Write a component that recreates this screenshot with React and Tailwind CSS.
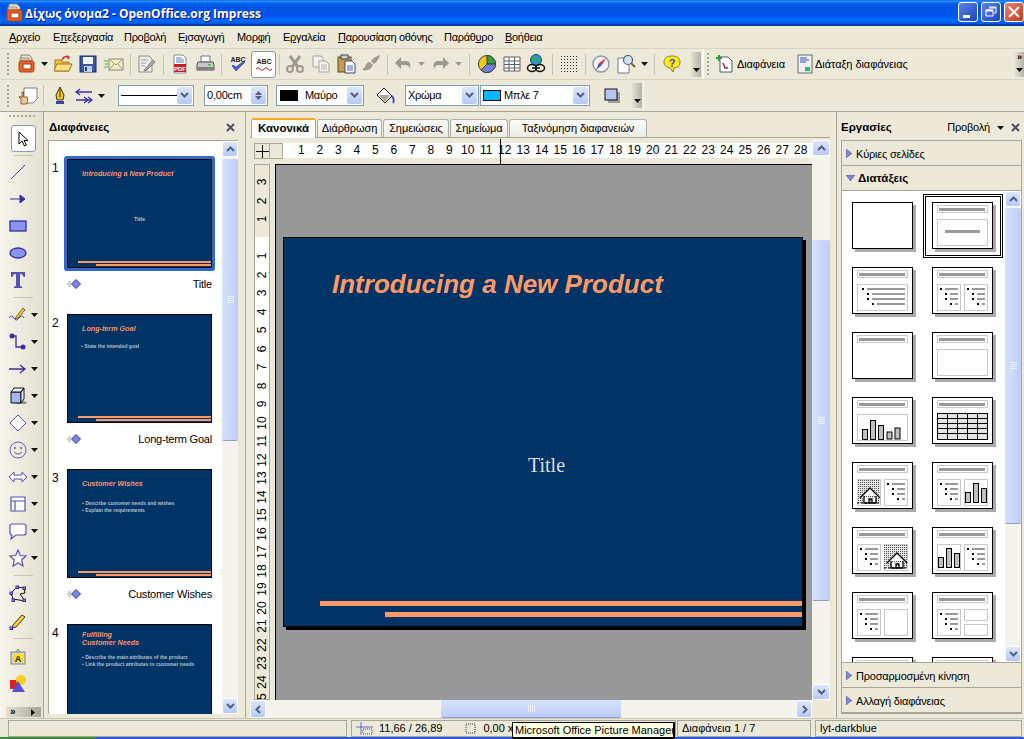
import React from 'react';

const Svg = ({ s = 20, children }) => (
  <svg width={s} height={s} viewBox="0 0 20 20" className="block shrink-0">{children}</svg>
);

const ImpressIcon = () => (
  <Svg>
    <path d="M4 1h8l3 3v3H4z" fill="#e8e4dc" stroke="#8a7f70" />
    <path d="M3 4h9v3H3z" fill="#d8c8b8" stroke="#a09080" />
    <rect x="2" y="7" width="15" height="11" rx="2" fill="#e8622a" stroke="#b04010" />
    <rect x="6" y="10" width="8" height="5" fill="#fff" stroke="#a03808" />
  </Svg>
);
const OpenIcon = () => (
  <Svg>
    <path d="M2 6h6l1 2h7v9H2z" fill="#f0c040" stroke="#a07818" />
    <path d="M1 17l3-7h15l-3 7z" fill="#fbe08a" stroke="#a07818" />
    <path d="M9 6c1-3 4-4 7-3" fill="none" stroke="#d83020" strokeWidth="1.5" />
    <path d="M14 1l3 2-2 3z" fill="#d83020" />
  </Svg>
);
const SaveIcon = () => (
  <Svg>
    <rect x="2" y="2" width="16" height="16" fill="#3a58a8" stroke="#1a2c70" />
    <rect x="5" y="3" width="10" height="7" fill="#f4f4f4" />
    <rect x="6" y="12" width="8" height="6" fill="#c8d0e0" />
    <rect x="7" y="13" width="2" height="4" fill="#2a3c80" />
  </Svg>
);
const MailIcon = () => (
  <Svg>
    <rect x="5" y="5" width="14" height="11" fill="#f4eecb" stroke="#8a8a70" />
    <path d="M5 5l7 6 7-6M5 16l5-6M19 16l-5-6" fill="none" stroke="#9a9a80" />
    <path d="M0 7h4M1 10h3M0 13h4" stroke="#30c040" />
  </Svg>
);
const EditIcon = () => (
  <Svg>
    <path d="M3 2h10l3 3v13H3z" fill="#f0f0ea" stroke="#8c8c84" />
    <path d="M5 6h7M5 9h5M5 12h4" stroke="#9c9c94" />
    <path d="M9 15l8-9 2 2-8 8-3 1z" fill="#a8a8a0" stroke="#807f78" />
  </Svg>
);
const PdfIcon = () => (
  <Svg>
    <path d="M4 1h9l3 3v15H4z" fill="#fff" stroke="#8c8c84" />
    <path d="M6 4h6M6 6h8M6 8h8" stroke="#6080c0" />
    <rect x="4" y="10" width="12" height="8" fill="#c82018" />
    <text x="10" y="16.5" fontSize="6" fontWeight="700" fontFamily="Liberation Sans" fill="#fff" textAnchor="middle">PDF</text>
  </Svg>
);
const PrintIcon = () => (
  <Svg>
    <path d="M6 2h9v6H6z" fill="#fff" stroke="#707070" />
    <path d="M3 8h15l1 3v5H2v-5z" fill="#c8c8c8" stroke="#505050" />
    <rect x="3" y="13" width="15" height="3" fill="#808080" />
    <rect x="13" y="10" width="3" height="1.5" fill="#30c040" />
  </Svg>
);
const SpellIcon = () => (
  <Svg>
    <text x="10" y="8" fontSize="7" fontWeight="700" fontFamily="Liberation Sans" fill="#222" textAnchor="middle">ABC</text>
    <path d="M4 12l4 5 9-9-1-1-8 6-3-2z" fill="#5060d0" stroke="#2a3490" strokeWidth=".6" />
  </Svg>
);
const AutoSpellIcon = () => (
  <Svg>
    <text x="10" y="10" fontSize="7" fontWeight="700" fontFamily="Liberation Sans" fill="#222" textAnchor="middle">ABC</text>
    <path d="M2 15q2-3 4 0t4 0 4 0 4 0" fill="none" stroke="#d81818" />
  </Svg>
);
const CutIcon = () => (
  <Svg>
    <path d="M5 2l8 11M15 2L7 13" stroke="#a09c90" strokeWidth="3" />
    <circle cx="5" cy="15" r="3" fill="none" stroke="#a09c90" strokeWidth="2" />
    <circle cx="15" cy="15" r="3" fill="none" stroke="#a09c90" strokeWidth="2" />
  </Svg>
);
const CopyIcon = () => (
  <Svg>
    <path d="M2 2h8l2 2v9H2z" fill="#f2f1ea" stroke="#a8a69c" />
    <path d="M8 7h7l3 3v8H8z" fill="#f2f1ea" stroke="#a8a69c" />
    <path d="M10 11h6M10 13h6M10 15h6" stroke="#b8b6ac" />
  </Svg>
);
const PasteIcon = () => (
  <Svg>
    <rect x="2" y="3" width="13" height="15" fill="#c49a50" stroke="#604818" />
    <rect x="5" y="1" width="7" height="4" fill="#d0d0d0" stroke="#404040" />
    <path d="M9 7h7l3 3v9H9z" fill="#fff" stroke="#404870" />
    <path d="M11 12h6M11 14h6M11 16h6" stroke="#4060c0" />
  </Svg>
);
const BrushIcon = () => (
  <Svg>
    <path d="M19 1c-3 1-7 3-9 6l3 3c3-2 5-6 6-9z" fill="#a09c90" />
    <path d="M9 8c-3 0-4 2-5 5l-3 3c4 1 9 0 11-5z" fill="#a09c90" />
  </Svg>
);
const UndoIcon = ({ flip }) => (
  <Svg>
    <g transform={flip ? 'translate(20 0) scale(-1 1)' : undefined}>
      <path d="M7 7h5c4 0 5 3 4 8-1-3-2-4-5-4H7v4L1 9l6-6z" fill="#9c9a90" />
    </g>
  </Svg>
);
const ChartIcon = () => (
  <Svg>
    <circle cx="10" cy="10" r="8.5" fill="#f0c820" stroke="#404040" />
    <path d="M10 10V1.5A8.5 8.5 0 0 1 18.5 10z" fill="#30a040" stroke="#404040" />
    <path d="M10 10h8.500A8.500 8.500 0 0 1 4 16z" fill="#7080d8" stroke="#404040" />
  </Svg>
);
const TableIcon = () => (
  <Svg>
    <path d="M2 3h16v14H2zM2 7h16M2 10.500h16M2 14h16M7 3v14M12.500 3v14" fill="#fff" stroke="#606060" />
  </Svg>
);
const GlobeIcon = () => (
  <Svg>
    <circle cx="10" cy="6" r="5.500" fill="#3090d8" stroke="#204870" />
    <path d="M6 3c3 0 4 1 4 3s-3 2-4 0zM11 5l4-1v3l-3 1z" fill="#30b040" />
    <ellipse cx="6" cy="14" rx="4.500" ry="3.500" fill="none" stroke="#111" strokeWidth="1.500" />
    <ellipse cx="14" cy="14" rx="4.500" ry="3.500" fill="none" stroke="#111" strokeWidth="1.500" />
    <path d="M6 14h8" stroke="#111" strokeWidth="1.500" />
  </Svg>
);
const GridIcon = () => (
  <svg width="17" height="17" viewBox="0 0 17 17" className="block shrink-0">
    <defs>
      <pattern id="griddots" width="3" height="3" patternUnits="userSpaceOnUse">
        <rect width="1" height="1" fill="#222" />
      </pattern>
    </defs>
    <rect width="17" height="17" fill="url(#griddots)" />
  </svg>
);
const CompassIcon = () => (
  <Svg>
    <circle cx="10" cy="10" r="8" fill="#f4f4f8" stroke="#9098b0" strokeWidth="1.500" />
    <path d="M15 4l-4 7-3-2z" fill="#d83838" />
    <path d="M5 16l3-7 3 2z" fill="#3858c8" />
  </Svg>
);
const ZoomIcon = () => (
  <Svg>
    <path d="M2 4h8l3 3v12H2z" fill="#fff" stroke="#707890" />
    <circle cx="12" cy="6" r="4.500" fill="#cfe4f8" stroke="#505870" strokeWidth="1.200" />
    <path d="M15 9l4 4" stroke="#806030" strokeWidth="2" />
  </Svg>
);
const HelpIcon = () => (
  <Svg>
    <path d="M10 2c5 0 8 2 8 6s-3 6-6 6l-1 4-3-4c-3-1-6-2-6-6s3-6 8-6z" fill="#ffe818" stroke="#808030" />
    <text x="10" y="12.500" fontSize="11" fontWeight="700" fontFamily="Liberation Sans" fill="#3848c0" textAnchor="middle">?</text>
  </Svg>
);
const NewSlideIcon = () => (
  <Svg>
    <path d="M5 3h8l4 4v11H5z" fill="#fff" stroke="#505868" />
    <path d="M4 1v6M1 4h6" stroke="#28a038" strokeWidth="2" />
    <path d="M8 9l2 5 3 0" fill="none" stroke="#c81828" strokeWidth="1.500" />
  </Svg>
);
const LayoutDocIcon = () => (
  <Svg>
    <rect x="3" y="1" width="14" height="18" fill="#eef0f4" stroke="#607060" />
    <path d="M5 4h7M5 6h9M5 8h6" stroke="#4050b8" />
    <rect x="10" y="13" width="5" height="4" fill="#30c050" />
  </Svg>
);
const HandDocIcon = () => (
  <Svg>
    <path d="M6 2h13v11l-4 4H6z" fill="#fff" stroke="#808078" />
    <path d="M3 18v-5l-2-2 1-1 2 2V6h1.500v5h4v5l-1 2z" fill="#f4c890" stroke="#503820" strokeWidth=".7" />
  </Svg>
);
const PenIcon = () => (
  <Svg>
    <path d="M10 1l4 8-1 5H7L6 9z" fill="#f4c030" stroke="#403810" />
    <path d="M10 3v8" stroke="#403810" />
    <rect x="6" y="15" width="8" height="3" fill="#4040b0" />
  </Svg>
);
const ArrowStyleIcon = () => (
  <Svg>
    <path d="M18 6H3M6 3L2 6l4 3" fill="none" stroke="#3830a8" strokeWidth="1.300" />
    <path d="M2 14h15M14 11l4 3-4 3M10 11l4 3-4 3" fill="none" stroke="#3830a8" strokeWidth="1.300" />
  </Svg>
);
const BucketIcon = () => (
  <Svg>
    <path d="M9 2l8 8-7 7-8-8z" fill="#f4f4f4" stroke="#202020" />
    <path d="M4 9h11l-5 7z" fill="#a8a8a0" />
    <path d="M17 10c2 2 2 6 1 7" fill="none" stroke="#4050c8" strokeWidth="2" />
  </Svg>
);
const ShadowIcon = () => (
  <Svg>
    <rect x="6" y="6" width="12" height="11" fill="#a0a098" />
    <rect x="3" y="3" width="12" height="11" fill="#b8c4f0" stroke="#101010" />
  </Svg>
);
const Caret = () => (
  <svg width="7" height="4" viewBox="0 0 7 4" className="block shrink-0"><path d="M0 0h7L3.500 4z" fill="#111" /></svg>
);
const Chevron = ({ dir = 'down', color = '#4d6185' }) => {
  const paths = {
    down: 'M1 2l3.500 3.500L8 2',
    up: 'M1 6l3.500-3.500L8 6',
    left: 'M6 1L2.500 4.500 6 8',
    right: 'M3 1l3.500 3.500L3 8',
  };
  return (
    <svg width="9" height="9" viewBox="0 0 9 9" className="block shrink-0">
      <path d={paths[dir]} fill="none" stroke={color} strokeWidth="2" />
    </svg>
  );
};

const Grip = () => (
  <div className="flex flex-col gap-[2px] w-[3px] py-[1px]">
    {[0, 1, 2, 3, 4, 5].map((i) => <div key={i} className="h-[2px] w-[2px] bg-[#a8a696]" />)}
  </div>
);
const Sep = ({ w }) => (
  <div className={`${w} flex justify-center shrink-0`}><div className="w-px h-[21px] bg-[#c8c5b2]" /></div>
);
const Btn = ({ w, children }) => (
  <div className={`${w} flex items-center justify-center shrink-0`}>{children}</div>
);
const Overflow = ({ className }) => (
  <div className={`${className} flex flex-col items-center justify-end pb-[5px] bg-gradient-to-r from-[#e4e1d0] to-[#b4b2a2] shrink-0`}>
    <Caret />
  </div>
);

const Combo = ({ w, children }) => (
  <div className={`${w} h-[21px] flex items-center bg-white border border-[#7f9db9] pl-[2px] pr-[1px] shrink-0`}>
    <div className="flex-1 min-w-0 flex items-center gap-[7px] text-[11px] tracking-[-0.3px] whitespace-nowrap overflow-hidden">{children}</div>
    <div className="w-[15px] h-[17px] flex items-center justify-center rounded-[2px] bg-gradient-to-b from-[#dde6fb] to-[#b6c9f5]">
      <Chevron />
    </div>
  </div>
);

const menuItems = [
  { w: 'w-[44px]', a: '', u: 'Α', b: 'ρχείο' },
  { w: 'w-[71px]', a: 'Ε', u: 'π', b: 'εξεργασία' },
  { w: 'w-[54px]', a: 'Προ', u: 'β', b: 'ολή' },
  { w: 'w-[59px]', a: 'Ε', u: 'ι', b: 'σαγωγή' },
  { w: 'w-[46px]', a: 'Μορ', u: 'φ', b: 'ή' },
  { w: 'w-[55px]', a: 'Ε', u: 'ρ', b: 'γαλεία' },
  { w: 'w-[106px]', a: '', u: 'Π', b: 'αρουσίαση οθόνης' },
  { w: 'w-[61px]', a: 'Παράθ', u: 'υ', b: 'ρο' },
  { w: 'w-[60px]', a: '', u: 'Β', b: 'οήθεια' },
];

const TitleBar = () => (
  <div className="h-[26px] shrink-0 flex items-center pl-[5px] pr-0 bg-[linear-gradient(to_bottom,#0058ee_0%,#3593ff_4%,#288eff_6%,#127dff_8%,#036ffc_10%,#0262ee_14%,#0057e5_20%,#0054e3_24%,#0055eb_56%,#005bf5_66%,#026afe_76%,#0062ef_86%,#0052d6_92%,#0040ab_94%,#003092_100%)]">
    <ImpressIcon />
    <span className="pt-[1px] text-[12px] font-bold text-white font-['Open_Sans','Liberation_Sans',sans-serif] [text-shadow:1px_1px_#0f1089]">Δίχως όνομα2 - OpenOffice.org Impress</span>
    <div className="ml-auto flex gap-[3px] mb-[3px]">
      <div className="w-[20px] h-[20px] rounded-[3px] border border-white bg-gradient-to-br from-[#5b83e6] to-[#1c45b8] flex items-end pl-[4px] pb-[3px]">
        <div className="w-[7px] h-[3px] bg-white" />
      </div>
      <div className="w-[20px] h-[20px] rounded-[3px] border border-white bg-gradient-to-br from-[#5b83e6] to-[#1c45b8] flex items-center justify-center">
        <svg width="12" height="12" viewBox="0 0 12 12"><path d="M4 1h7v6H9M1 4h7v6H1zM4 2h7" fill="none" stroke="#fff" /><path d="M1 4.500h7" stroke="#fff" strokeWidth="2" /></svg>
      </div>
      <div className="w-[20px] h-[20px] rounded-[3px] border border-white bg-gradient-to-br from-[#e8876a] to-[#c2351a] flex items-center justify-center">
        <svg width="12" height="12" viewBox="0 0 12 12"><path d="M1 1l10 10M11 1L1 11" stroke="#fff" strokeWidth="2" /></svg>
      </div>
    </div>
  </div>
);

const MenuBar = () => (
  <div className="h-[23px] shrink-0 flex items-center pl-[9px] text-[11px] tracking-[-0.3px] border-b border-[#d8d5c4]">
    {menuItems.map((m) => (
      <span key={m.b} className={`${m.w} shrink-0 whitespace-nowrap`}>{m.a}<u>{m.u}</u>{m.b}</span>
    ))}
  </div>
);

const ToolbarOne = () => (
  <div className="h-[31px] shrink-0 flex items-center border-b border-[#d8d5c4]">
    <div className="w-[15px] flex justify-end pr-[5px] shrink-0"><Grip /></div>
    <Btn w="w-[24px]"><ImpressIcon /></Btn>
    <Btn w="w-[11px]"><Caret /></Btn>
    <Btn w="w-[25px]"><OpenIcon /></Btn>
    <Btn w="w-[25px]"><SaveIcon /></Btn>
    <Btn w="w-[27px]"><MailIcon /></Btn>
    <Sep w="w-[6px]" />
    <Btn w="w-[26px]"><EditIcon /></Btn>
    <Sep w="w-[8px]" />
    <Btn w="w-[25px]"><PdfIcon /></Btn>
    <Btn w="w-[25px]"><PrintIcon /></Btn>
    <Sep w="w-[8px]" />
    <Btn w="w-[26px]"><SpellIcon /></Btn>
    <Btn w="w-[25px]">
      <div className="w-[25px] h-[27px] rounded-[3px] border border-[#7f9db9] bg-white flex items-center justify-center"><AutoSpellIcon /></div>
    </Btn>
    <Sep w="w-[6px]" />
    <Btn w="w-[26px]"><CutIcon /></Btn>
    <Btn w="w-[25px]"><CopyIcon /></Btn>
    <Btn w="w-[25px]"><PasteIcon /></Btn>
    <Btn w="w-[25px]"><BrushIcon /></Btn>
    <Sep w="w-[8px]" />
    <Btn w="w-[25px]"><UndoIcon /></Btn>
    <Btn w="w-[11px]"><svg width="7" height="4" viewBox="0 0 7 4"><path d="M0 0h7L3.500 4z" fill="#a09c90" /></svg></Btn>
    <Btn w="w-[25px]"><UndoIcon flip /></Btn>
    <Btn w="w-[12px]"><svg width="7" height="4" viewBox="0 0 7 4"><path d="M0 0h7L3.500 4z" fill="#a09c90" /></svg></Btn>
    <Sep w="w-[10px]" />
    <Btn w="w-[25px]"><ChartIcon /></Btn>
    <Btn w="w-[25px]"><TableIcon /></Btn>
    <Btn w="w-[24px]"><GlobeIcon /></Btn>
    <Sep w="w-[8px]" />
    <Btn w="w-[26px]"><GridIcon /></Btn>
    <Sep w="w-[6px]" />
    <Btn w="w-[25px]"><CompassIcon /></Btn>
    <Btn w="w-[26px]"><ZoomIcon /></Btn>
    <Btn w="w-[10px]"><Caret /></Btn>
    <Sep w="w-[10px]" />
    <Btn w="w-[26px]"><HelpIcon /></Btn>
    <div className="w-[6px] shrink-0" />
    <Overflow className="w-[10px] h-[25px]" />
    <div className="w-[2px] h-full bg-white/70 ml-[1px] shrink-0" />
    <div className="w-[3px] shrink-0" />
    <Grip />
    <div className="w-[5px] shrink-0" />
    <NewSlideIcon />
    <span className="ml-[2px] w-[58px] shrink-0 text-[11px] tracking-[-0.1px] whitespace-nowrap">Διαφάνεια</span>
    <LayoutDocIcon />
    <span className="text-[11px] tracking-[-0.05px] whitespace-nowrap">Διάταξη διαφάνειας</span>
    <div className="ml-auto w-[9px] h-[25px] flex flex-col items-center justify-between pb-[5px] bg-gradient-to-r from-[#e4e1d0] to-[#b4b2a2] shrink-0">
      <span className="text-[9px] leading-[11px] font-bold">»</span>
      <Caret />
    </div>
  </div>
);

const ToolbarTwo = () => (
  <div className="h-[31px] shrink-0 flex items-center">
    <div className="w-[15px] flex justify-end pr-[5px] shrink-0"><Grip /></div>
    <Btn w="w-[25px]"><HandDocIcon /></Btn>
    <Sep w="w-[6px]" />
    <Btn w="w-[27px]"><PenIcon /></Btn>
    <Btn w="w-[22px]"><ArrowStyleIcon /></Btn>
    <Btn w="w-[13px]"><Caret /></Btn>
    <div className="w-[10px] shrink-0" />
    <Combo w="w-[76px]"><div className="w-[56px] h-px bg-black" /></Combo>
    <div className="w-[10px] shrink-0" />
    <div className="w-[64px] h-[21px] flex items-center bg-white border border-[#7f9db9] pl-[2px] pr-[1px] shrink-0">
      <span className="flex-1 text-[11px] tracking-[-0.2px]">0,00cm</span>
      <div className="w-[15px] h-[17px] flex flex-col items-center justify-center gap-[1px] rounded-[2px] bg-gradient-to-b from-[#dde6fb] to-[#b6c9f5]">
        <svg width="7" height="4" viewBox="0 0 7 4"><path d="M0 4L3.500 0 7 4z" fill="#4d6185" /></svg>
        <svg width="7" height="4" viewBox="0 0 7 4"><path d="M0 0h7L3.500 4z" fill="#4d6185" /></svg>
      </div>
    </div>
    <div className="w-[8px] shrink-0" />
    <Combo w="w-[88px]"><div className="w-[18px] h-[11px] bg-black ml-[1px]" /><span>Μαύρο</span></Combo>
    <Btn w="w-[41px]"><BucketIcon /></Btn>
    <Combo w="w-[74px]"><span>Χρώμα</span></Combo>
    <div className="w-[1px] shrink-0" />
    <Combo w="w-[110px]"><div className="w-[18px] h-[11px] bg-[#00b8ff] border border-black" /><span className="-ml-[4px]">Μπλε 7</span></Combo>
    <Btn w="w-[44px]"><ShadowIcon /></Btn>
    <Overflow className="w-[10px] h-[25px] -ml-[2px]" />
    <div className="w-px h-full bg-white/70 ml-[1px]" />
  </div>
);

const railTop = [
  { key: 'line', icon: <path d="M3 17L17 3" stroke="#4a3fb0" /> },
  { key: 'arrow', icon: <path d="M2 10h15M12 6l5 4-5 4z" stroke="#382ea0" fill="#382ea0" /> },
  { key: 'rect', icon: <rect x="2" y="5" width="16" height="10" fill="#8a94f0" stroke="#3a2f98" strokeWidth="1.300" /> },
  { key: 'ellipse', icon: <ellipse cx="10" cy="10" rx="8" ry="5" fill="#8a94f0" stroke="#3a2f98" strokeWidth="1.300" /> },
  { key: 'text', icon: <path d="M3 2h14v5h-1.500c-.5-2-1-3-3.500-3v12l2 .5V18H6v-1.500l2-.5V4c-2.500 0-3 1-3.500 3H3z" fill="#5a50b8" /> },
];
const railMid = [
  { key: 'curve', icon: <g><path d="M1 13q3-4 5 0t5 0 5 0" fill="none" stroke="#4a3fb0" /><path d="M8 12l7-9 2 2-7 8-3 1z" fill="#f8c820" stroke="#403810" strokeWidth=".7" /></g> },
  { key: 'connector', icon: <g><circle cx="4" cy="4" r="2.500" fill="#382ea0" /><circle cx="15" cy="15" r="2.500" fill="#382ea0" /><path d="M4 4h4v11h7" fill="none" stroke="#382ea0" strokeWidth="1.300" /></g> },
  { key: 'lines', icon: <path d="M1 10h16M12 6l5 4-5 4" fill="none" stroke="#382ea0" strokeWidth="1.300" /> },
  { key: 'cube', icon: <g><path d="M6 18h12l1-2-4-1z" fill="#909088" /><path d="M3 6h10v11H3z" fill="#a8b4f0" stroke="#101010" /><path d="M3 6l3-4h10l-3 4zM13 6l3-4v11l-3 4z" fill="#e8ecfc" stroke="#101010" /></g> },
  { key: 'diamond', icon: <path d="M10 2l8 8-8 8-8-8z" fill="#fff" stroke="#5a50b8" /> },
  { key: 'smile', icon: <g fill="none" stroke="#6a5fc0"><circle cx="10" cy="10" r="8" /><circle cx="7" cy="8" r=".8" /><circle cx="13" cy="8" r=".8" /><path d="M6 12q4 4 8 0" /></g> },
  { key: 'arrows', icon: <path d="M1 10l5-5v3h8V5l5 5-5 5v-3H6v3z" fill="#fff" stroke="#5a50b8" /> },
  { key: 'flow', icon: <path d="M3 3h14v14H3zM3 7h14M7 7v10" fill="#fff" stroke="#5a50b8" strokeWidth="1.200" /> },
  { key: 'callout', icon: <path d="M4 3h12q2 0 2 2v7q0 2-2 2H8l-5 4 1-4q-2 0-2-2V5q0-2 2-2z" fill="#fff" stroke="#5a50b8" strokeWidth="1.200" /> },
  { key: 'star', icon: <path d="M10 2l2.300 5.500 5.700.5-4.300 4 1.300 6-5-3-5 3 1.300-6L2 8l5.700-.5z" fill="#fff" stroke="#5a50b8" strokeWidth="1.200" /> },
];

const RailItem = ({ children, caret }) => (
  <div className="h-[27px] flex items-center pl-[6px] shrink-0">
    <div className="w-[23px] flex justify-center"><Svg>{children}</Svg></div>
    {caret && <div className="ml-[2px]"><Caret /></div>}
  </div>
);
const RailSep = ({ h = 'h-[6px]' }) => <div className={`${h} flex items-center justify-center shrink-0 pl-[3px]`}><div className="h-px w-[19px] bg-[#c8c5b2]" /></div>;

const ToolRail = () => (
  <div className="w-[44px] shrink-0 flex flex-col border-r border-[#a8a696] bg-gradient-to-r from-[#f6f4ec] to-[#e4e1d0] pt-[3px]">
    <div className="flex gap-[2px] justify-center h-[8px] pl-[1px]">
      {[0, 1, 2, 3, 4, 5, 6].map((i) => <div key={i} className="h-[2px] w-[2px] bg-[#a8a696]" />)}
    </div>
    <div className="ml-[11px] w-[25px] h-[27px] mt-[2px] rounded-[3px] border border-[#7f9db9] bg-white flex items-center justify-center shrink-0">
      <svg width="12" height="16" viewBox="0 0 12 16"><path d="M1 1v12l3-3 2.500 5 2-1-2.500-4.500h4z" fill="#fff" stroke="#000" /></svg>
    </div>
    <RailSep />
    {railTop.map((r) => <RailItem key={r.key}>{r.icon}</RailItem>)}
    <RailSep h="h-[8px]" />
    {railMid.map((r) => <RailItem key={r.key} caret>{r.icon}</RailItem>)}
    <RailSep h="h-[9px]" />
    <RailItem><g><path d="M5 15L3 9l6-6 7 1 1 5-5 1 5 7z" fill="none" stroke="#101010" /><g fill="#8a94f0" stroke="#3a2f98"><rect x="2" y="8" width="2.500" height="2.500" /><rect x="8" y="2" width="2.500" height="2.500" /><rect x="15" y="3" width="2.500" height="2.500" /><rect x="4" y="15" width="2.500" height="2.500" /><rect x="15" y="15" width="2.500" height="2.500" /></g></g></RailItem>
    <RailItem><g><path d="M5 14l9-10 3 2-9 10-4 1z" fill="#f8d040" stroke="#403810" /><rect x="2" y="16" width="2.500" height="2.500" fill="#8a94f0" stroke="#3a2f98" /></g></RailItem>
    <RailSep h="h-[9px]" />
    <RailItem><g><rect x="3" y="5" width="14" height="12" fill="#d8d8d0" stroke="#808078" /><rect x="5" y="7" width="10" height="8" fill="#f8e020" /><text x="10" y="14.500" fontSize="9" fontWeight="700" fontFamily="Liberation Sans" textAnchor="middle" fill="#222">A</text><path d="M8 5l2-3 2 3" fill="none" stroke="#808078" /></g></RailItem>
    <RailItem><g><rect x="2" y="6" width="9" height="9" fill="#e02020" /><circle cx="13" cy="6" r="5" fill="#f8d020" /><path d="M10 7l7 11H4z" fill="#5850d0" /></g></RailItem>
    <div className="mt-auto mb-[1px] ml-[6px] w-[35px] h-[10px] flex items-center justify-between pl-[4px] pr-[6px] bg-gradient-to-r from-[#e4e1d0] to-[#a8a696]">
      <span className="text-[10px] leading-[10px] font-bold">»</span>
      <svg width="4" height="7" viewBox="0 0 4 7"><path d="M0 0l4 3.500L0 7z" fill="#111" /></svg>
    </div>
  </div>
);

const VScroll = ({ topGap, thumb, className = '' }) => (
  <div className={`${className} shrink-0 flex flex-col bg-[#f5f4ec]`}>
    <div className="h-[16px] shrink-0 rounded-[2px] border border-white bg-gradient-to-b from-[#dde6fb] to-[#b6c9f5] flex items-center justify-center"><Chevron dir="up" /></div>
    <div className={`${topGap} shrink-0`} />
    <div className={`${thumb} shrink-0 rounded-[2px] border-b border-[#8aa2d8] bg-[linear-gradient(to_right,#d6e2fb,#bccef8)] flex flex-col items-center justify-center gap-[1px]`}>
      {[0, 1, 2, 3].map((i) => <div key={i} className="h-px w-[7px] bg-[#eef3fe]" />)}
    </div>
    <div className="flex-1" />
    <div className="h-[16px] shrink-0 rounded-[2px] border border-white bg-gradient-to-b from-[#dde6fb] to-[#b6c9f5] flex items-center justify-center"><Chevron /></div>
  </div>
);

const ThumbTitle = ({ children }) => (
  <div className="font-['Liberation_Sans',sans-serif] text-[7.2px] leading-[8px] font-bold italic text-[#f59468] pl-[14px]">{children}</div>
);
const ThumbBullet = ({ children }) => (
  <div className="font-['Liberation_Sans',sans-serif] text-[5px] leading-[7px] font-bold text-[#b4c0ce] pl-[13px] whitespace-nowrap">• {children}</div>
);
const Thumb = ({ selected, pt, children, cut }) => (
  <div className={`${cut ? 'h-[92px] border-b-0' : 'h-[109px]'} w-[145px] bg-[#003366] border border-black flex flex-col relative shrink-0 ${pt} ${selected ? 'shadow-[0_0_0_3px_#316ac5] rounded-[1px]' : ''}`}>
    {children}
    {!cut && (
      <div className="mt-auto mb-[1px] flex flex-col gap-[1px] items-end">
        <div className="h-[2px] w-[133px] bg-[#ff9966]" />
        <div className="h-[2px] w-[115px] bg-[#ff9966]" />
      </div>
    )}
  </div>
);
const Transition = () => (
  <svg width="14" height="10" viewBox="0 0 14 10" className="block">
    <path d="M1 3h3M0 5h4M1 7h3" stroke="#a0a0a0" />
    <path d="M9 0.500l4.500 4.500L9 9.500 4.500 5z" fill="#7c84f0" stroke="#3a3a90" />
  </svg>
);
const SlideRow = ({ n, label, children }) => (
  <div className="h-[155px] shrink-0 flex pl-[3px]">
    <span className="w-[15px] text-[12px] leading-[14px] pt-[2px]">{n}</span>
    <div className="flex flex-col">
      {children}
      {label && (
        <div className="flex items-center justify-between w-[145px] mt-[8px] text-[11px] tracking-[-0.2px]">
          <Transition />
          <span>{label}</span>
        </div>
      )}
    </div>
  </div>
);

const SlidesPanel = () => (
  <div className="w-[202px] shrink-0 flex flex-col pl-[4px] pr-[7px] border-r border-[#a8a696]">
    <div className="h-[28px] shrink-0 flex items-center justify-between pl-[1px] pr-[3px] pt-[3px]">
      <span className="text-[11.5px] font-bold">Διαφάνειες</span>
      <svg width="9" height="9" viewBox="0 0 9 9"><path d="M1 1l7 7M8 1L1 8" stroke="#505060" strokeWidth="2" /></svg>
    </div>
    <div className="flex-1 min-h-0 flex bg-white border-l border-t border-[#a8a696] overflow-hidden mb-[4px]">
      <div className="flex-1 min-w-0 overflow-hidden pt-[18px]">
        <SlideRow n="1" label="Title">
          <Thumb selected pt="pt-[10px]">
            <ThumbTitle>Introducing a New Product</ThumbTitle>
            <div className="mt-[37px] text-center text-[5.5px] leading-[8px] font-bold text-[#b4c0ce] font-['Liberation_Sans',sans-serif]">Title</div>
          </Thumb>
        </SlideRow>
        <SlideRow n="2" label="Long-term Goal">
          <Thumb pt="pt-[10px]">
            <ThumbTitle>Long-term Goal</ThumbTitle>
            <div className="mt-[10px]"><ThumbBullet>State the intended goal</ThumbBullet></div>
          </Thumb>
        </SlideRow>
        <SlideRow n="3" label="Customer Wishes">
          <Thumb pt="pt-[10px]">
            <ThumbTitle>Customer Wishes</ThumbTitle>
            <div className="mt-[12px] pl-[1px]">
              <ThumbBullet>Describe customer needs and wishes</ThumbBullet>
              <ThumbBullet>Explain the requirements</ThumbBullet>
            </div>
          </Thumb>
        </SlideRow>
        <SlideRow n="4">
          <Thumb cut pt="pt-[6px]">
            <ThumbTitle>Fulfilling<br />Customer Needs</ThumbTitle>
            <div className="mt-[7px] pl-[1px]">
              <ThumbBullet>Describe the main attributes of the product</ThumbBullet>
              <ThumbBullet>Link the product attributes to customer needs</ThumbBullet>
            </div>
          </Thumb>
        </SlideRow>
      </div>
      <VScroll className="w-[16px]" topGap="h-[2px]" thumb="h-[282px]" />
    </div>
  </div>
);

const tabs = [
  { label: 'Διάρθρωση', w: 'w-[65px]' },
  { label: 'Σημειώσεις', w: 'w-[66px]' },
  { label: 'Σημείωμα', w: 'w-[58px]' },
  { label: 'Ταξινόμηση διαφανειών', w: 'w-[138px]' },
];

const Tabs = () => (
  <div className="h-[26px] shrink-0 flex items-end pl-[1px] gap-[1px] border-b border-[#a8a696]">
    <div className="w-[65px] h-[20px] -mb-px bg-white rounded-t-[3px] border-t-2 border-[#f8a820] border-x border-x-[#a8a696] flex items-center justify-center text-[11.5px] font-bold">Κανονικά</div>
    {tabs.map((t) => (
      <div key={t.label} className={`${t.w} h-[18px] rounded-t-[3px] border border-b-0 border-[#a8b0a8] bg-gradient-to-b from-[#fcfcfa] to-[#ecebe2] flex items-center justify-center text-[11px] tracking-[-0.1px] shrink-0`}>{t.label}</div>
    ))}
  </div>
);

const hNums = Array.from({ length: 28 }, (_, i) => i + 1);
const vNums = Array.from({ length: 25 }, (_, i) => i + 1);

const HRuler = () => (
  <div className="h-[26px] shrink-0 flex items-start pt-[5px] pl-[4px] relative">
    <div className="w-[16px] h-[16px] border border-[#a8a696] bg-[#ece9d8] flex items-center justify-center shrink-0">
      <svg width="13" height="13" viewBox="0 0 13 13"><path d="M6.500 0v13M0 6.500h13" stroke="#111" /></svg>
    </div>
    <div className="w-[13px] h-[16px] border-y border-r border-[#a8a696] shrink-0" />
    <div className="flex-1 h-[15px] bg-white flex pl-[9px] overflow-hidden text-[12px] leading-[15px]">
      {hNums.map((n) => <span key={n} className="w-[18.5px] shrink-0 text-center">{n}</span>)}
    </div>
    <div className="absolute left-[250px] top-[1px] bottom-0 w-px bg-black" />
  </div>
);

const VRuler = () => (
  <div className="w-[16px] ml-[4px] shrink-0 flex flex-col items-center pt-[8px] overflow-hidden border border-[#a8a696] text-[12px] bg-[linear-gradient(to_bottom,#ece9d8_72px,#fff_72px,#fff_462px,#ece9d8_462px)]">
    {[3, 2, 1, ''].concat(vNums).map((n, i) => (
      <span key={i} className="h-[18.5px] shrink-0 w-[14px] flex items-center justify-center">
        <span className="-rotate-90 leading-none">{n}</span>
      </span>
    ))}
  </div>
);

const Slide = () => (
  <div className="ml-[7px] mt-[72px] w-[520px] h-[390px] bg-[#003366] border border-black shadow-[3px_3px_0_#000] flex flex-col relative shrink-0">
    <div className="pl-[48px] pt-[29px] text-[26px] leading-[34px] font-bold italic text-[#ff9966] font-['Liberation_Sans',sans-serif] whitespace-nowrap">Introducing a New Product</div>
    <div className="mt-[152px] text-center pl-[7px] text-[20px] leading-[24px] text-[#dddddd] font-['Liberation_Serif',serif]">Title</div>
    <div className="mt-auto mb-[9px] flex flex-col gap-[6px] items-end">
      <div className="h-[5px] w-[482px] bg-[#ff9966]" />
      <div className="h-[5px] w-[417px] bg-[#ff9966]" />
    </div>
  </div>
);

const Center = () => (
  <div className="flex-1 min-w-0 flex flex-col">
    <Tabs />
    <div className="flex-1 min-h-0 flex">
      <div className="flex-1 min-w-0 flex flex-col">
        <HRuler />
        <div className="flex-1 min-h-0 flex">
          <VRuler />
          <div className="ml-[5px] flex-1 min-w-0 bg-[#999999] border-t border-l border-black overflow-hidden">
            <Slide />
          </div>
        </div>
        <div className="h-[18px] shrink-0 flex bg-[#f5f4ec]">
          <div className="w-[16px] shrink-0 rounded-[2px] border border-white bg-gradient-to-b from-[#dde6fb] to-[#b6c9f5] flex items-center justify-center"><Chevron dir="left" /></div>
          <div className="w-[175px] shrink-0" />
          <div className="w-[180px] shrink-0 rounded-[2px] border-b border-[#8aa2d8] bg-[linear-gradient(to_bottom,#d6e2fb,#bccef8)] flex items-center justify-center gap-[1px]">
            {[0, 1, 2, 3].map((i) => <div key={i} className="w-px h-[7px] bg-[#eef3fe]" />)}
          </div>
          <div className="flex-1" />
          <div className="w-[16px] shrink-0 rounded-[2px] border border-white bg-gradient-to-b from-[#dde6fb] to-[#b6c9f5] flex items-center justify-center"><Chevron dir="right" /></div>
        </div>
      </div>
      <div className="flex flex-col w-[18px] shrink-0 pt-[2px]">
        <VScroll className="flex-1 min-h-0" topGap="h-[84px]" thumb="h-[361px]" />
        <div className="h-[18px] shrink-0" />
      </div>
    </div>
  </div>
);

const Box = ({ x, y, w, h }) => <rect x={x + 0.5} y={y + 0.5} width={w} height={h} fill="#fff" stroke="#c8c8c8" />;
const Lines = ({ x, y, w }) => (
  <g>
    <rect x={x} y={y} width="2" height="2" fill="#000" />
    <rect x={x + 5} y={y} width={w - 5} height="2" fill="#999" />
    <rect x={x + 5} y={y + 5} width="2" height="2" fill="#000" />
    <rect x={x + 10} y={y + 5} width={w - 10} height="2" fill="#999" />
    <rect x={x + 5} y={y + 10} width="2" height="2" fill="#000" />
    <rect x={x + 10} y={y + 10} width={w - 10} height="2" fill="#999" />
    <rect x={x + 10} y={y + 15} width="2" height="2" fill="#000" />
    <rect x={x + 15} y={y + 15} width={w - 15} height="2" fill="#999" />
  </g>
);
const Bars = ({ x, y }) => (
  <g fill="#c0c0c0" stroke="#000">
    <rect x={x + 0.5} y={y + 9.500} width="5" height="10" />
    <rect x={x + 8.500} y={y + 0.500} width="5" height="19" />
    <rect x={x + 16.500} y={y + 5.500} width="5" height="14" />
  </g>
);
const House = ({ x, y }) => (
  <g>
    <rect x={x} y={y} width="23" height="24" fill="url(#dither)" />
    <path d={`M${x + 3} ${y + 18}l10-10 10 10M${x + 7} ${y + 16}v7h12v-7M${x + 12} ${y + 23}v-4h3v4`} fill="#fff" stroke="#000" strokeWidth="1.300" />
    <path d={`M${x} ${y + 23}h23`} stroke="#000" strokeDasharray="2 2" />
  </g>
);

const layoutBody = {
  blank: null,
  titleOnly: <g />,
  center: <g><Box x={5} y={17} w={50} h={26} /><rect x={13} y={28} width="35" height="3" fill="#999" /></g>,
  list: <g><Box x={5} y={17} w={50} h={26} /><Lines x={10} y={21} w={43} /></g>,
  twoLists: <g><Box x={5} y={17} w={23} h={26} /><Box x={32} y={17} w={23} h={26} /><Lines x={8} y={21} w={18} /><Lines x={35} y={21} w={18} /></g>,
  box: <g><Box x={5} y={17} w={50} h={26} /></g>,
  chart: <g><Box x={5} y={17} w={50} h={26} /><Bars x={10} y={23} /><rect x={35} y={35} width="5" height="7" fill="#c0c0c0" stroke="#000" /><rect x={43} y={31} width="5" height="11" fill="#c0c0c0" stroke="#000" /></g>,
  table: (
    <g>
      <rect x="5.500" y="16.500" width="50" height="26" fill="#e4e4e4" stroke="#000" />
      <path d="M5 21.500h50M5 26.500h50M5 31.500h50M5 36.500h50M15.500 17v26M25.500 17v26M35.500 17v26M45.500 17v26" stroke="#000" />
    </g>
  ),
  imageList: <g><Box x={5} y={17} w={23} h={26} /><Box x={32} y={17} w={23} h={26} /><House x={5} y={18} /><Lines x={35} y={21} w={18} /></g>,
  listChart: <g><Box x={5} y={17} w={23} h={26} /><Box x={32} y={17} w={23} h={26} /><Lines x={8} y={21} w={18} /><Bars x={33} y={21} /></g>,
  listImage: <g><Box x={5} y={17} w={23} h={26} /><Box x={32} y={17} w={23} h={26} /><Lines x={8} y={21} w={18} /><House x={32} y={18} /></g>,
  chartList: <g><Box x={5} y={17} w={23} h={26} /><Box x={32} y={17} w={23} h={26} /><Bars x={6} y={21} /><Lines x={35} y={21} w={18} /></g>,
  listEmpty: <g><Box x={5} y={17} w={23} h={26} /><Box x={32} y={17} w={23} h={26} /><Lines x={8} y={21} w={18} /></g>,
  listTwo: <g><Box x={5} y={17} w={23} h={26} /><Box x={32} y={17} w={23} h={11} /><Box x={32} y={32} w={23} h={11} /><Lines x={8} y={21} w={18} /></g>,
};

const LayoutThumb = ({ kind, selected }) => (
  <svg width="80" height="65" viewBox="0 0 80 65" className="block overflow-visible">
    {selected && (
      <g fill="none" stroke="#000">
        <rect x="1.500" y="3.500" width="79" height="63" />
        <rect x="3.500" y="5.500" width="75" height="59" />
      </g>
    )}
    <g transform="translate(10 11)">
      <rect x="3" y="3" width="61" height="47" fill="#aaa" />
      <rect x="0.500" y="0.500" width="60" height="46" fill="#fff" stroke="#000" />
      {kind !== 'blank' && (
        <g>
          <Box x={5} y={3} w={50} h={7} />
          <rect x={7} y={6} width="46" height="3" fill="#999" />
        </g>
      )}
      {layoutBody[kind]}
    </g>
  </svg>
);

const layouts = [
  ['blank'], ['center', true],
  ['list'], ['twoLists'],
  ['titleOnly'], ['box'],
  ['chart'], ['table'],
  ['imageList'], ['listChart'],
  ['listImage'], ['chartList'],
  ['listEmpty'], ['listTwo'],
  ['list'], ['twoLists'],
];

const Section = ({ label, open }) => (
  <div className="h-[25px] shrink-0 flex items-center gap-[3px] pl-[4px] border-b border-[#a8a696] bg-[#ece9d8]">
    {open ? (
      <svg width="9" height="7" viewBox="0 0 9 7"><path d="M0 0h9L4.500 6z" fill="#7c84e0" stroke="#505870" strokeWidth=".5" /></svg>
    ) : (
      <svg width="7" height="9" viewBox="0 0 7 9"><path d="M0 0l6 4.500L0 9z" fill="#7c84e0" stroke="#505870" strokeWidth=".5" /></svg>
    )}
    <span className={`pt-[2px] ${open ? 'text-[11.5px] font-bold' : 'text-[11px] tracking-[-0.2px]'}`}>{label}</span>
  </div>
);

const TasksPanel = () => (
  <div className="w-[188px] shrink-0 flex flex-col border-l border-[#a8a696] pl-[4px] pr-[2px]">
    <div className="h-[28px] shrink-0 flex items-center pr-[2px] pt-[3px]">
      <span className="text-[11.5px] font-bold">Εργασίες</span>
      <span className="ml-auto text-[11px] tracking-[-0.2px]">Προβολή</span>
      <div className="ml-[7px]"><Caret /></div>
      <svg className="ml-[7px]" width="9" height="9" viewBox="0 0 9 9"><path d="M1 1l7 7M8 1L1 8" stroke="#505060" strokeWidth="2" /></svg>
    </div>
    <div className="flex-1 min-h-0 flex flex-col border border-[#a8a696] mb-[4px]">
      <Section label="Κύριες σελίδες" />
      <Section label="Διατάξεις" open />
      <div className="flex-1 min-h-0 flex bg-white">
        <div className="flex-1 min-w-0 overflow-hidden">
          <svg width="0" height="0" className="absolute">
            <defs>
              <pattern id="dither" width="2" height="2" patternUnits="userSpaceOnUse">
                <rect width="2" height="2" fill="#e4e4e4" />
                <rect width="1" height="1" fill="#555" />
              </pattern>
            </defs>
          </svg>
          <div className="grid grid-cols-[80px_80px] auto-rows-[65px]">
            {layouts.map(([kind, sel], i) => <LayoutThumb key={i} kind={kind} selected={sel} />)}
          </div>
        </div>
        <VScroll className="w-[16px]" topGap="h-[1px]" thumb="h-[316px]" />
      </div>
      <div className="border-t border-[#a8a696]"><Section label="Προσαρμοσμένη κίνηση" /></div>
      <Section label="Αλλαγή διαφάνειας" />
    </div>
  </div>
);

const StatusBox = ({ className, children }) => (
  <div className={`${className} h-[17px] shrink-0 flex items-center border border-[#a8a696] text-[11px] whitespace-nowrap overflow-hidden`}>{children}</div>
);

const StatusBar = () => (
  <div className="h-[19px] shrink-0 flex items-center pl-[8px] border-t border-[#c8c5b2] relative">
    <StatusBox className="w-[339px]" />
    <StatusBox className="w-[325px] ml-[4px] pl-[4px]">
      <svg width="17" height="13" viewBox="0 0 17 13" className="shrink-0"><path d="M5 0v13M0 5h17" stroke="#3848d0" strokeWidth=".8" /><path d="M7 7h9v5H7z" fill="none" stroke="#444" strokeDasharray="1 1" /></svg>
      <span className="ml-[6px]">11,66 / 26,89</span>
      <svg width="13" height="13" viewBox="0 0 13 13" className="ml-[22px] shrink-0"><path d="M2 2h9v9H2z" fill="none" stroke="#333" strokeDasharray="1 1" /></svg>
      <span className="ml-[6px]">0,00 x 0,00</span>
    </StatusBox>
    <StatusBox className="w-[134px] pl-[4px] ml-[1px]">Διαφάνεια 1 / 7</StatusBox>
    <StatusBox className="w-[207px] pl-[4px] ml-[4px]">lyt-darkblue</StatusBox>
    <div className="absolute left-[512px] top-[3px] w-[163px] h-[17px] bg-[#ffffe1] border border-black border-r-2 border-b-2 pl-[2px] text-[11px] leading-[15px] whitespace-nowrap z-10">Microsoft Office Picture Manager</div>
  </div>
);

export default function App() {
  return (
    <div className="w-[1024px] h-[739px] overflow-hidden flex flex-col bg-[#ece9d8] text-black font-['Liberation_Sans','Noto_Sans',sans-serif]">
      <TitleBar />
      <MenuBar />
      <ToolbarOne />
      <ToolbarTwo />
      <div className="flex-1 min-h-0 flex border-t border-[#a8a696]">
        <ToolRail />
        <SlidesPanel />
        <div className="w-[4px] shrink-0" />
        <Center />
        <div className="w-[6px] shrink-0" />
        <TasksPanel />
      </div>
      <StatusBar />
      <div className="h-[2px] shrink-0 flex">
        <div className="w-[96px] bg-[#2f8f3a]" />
        <div className="flex-1 bg-[#1f5fd8]" />
      </div>
    </div>
  );
}
